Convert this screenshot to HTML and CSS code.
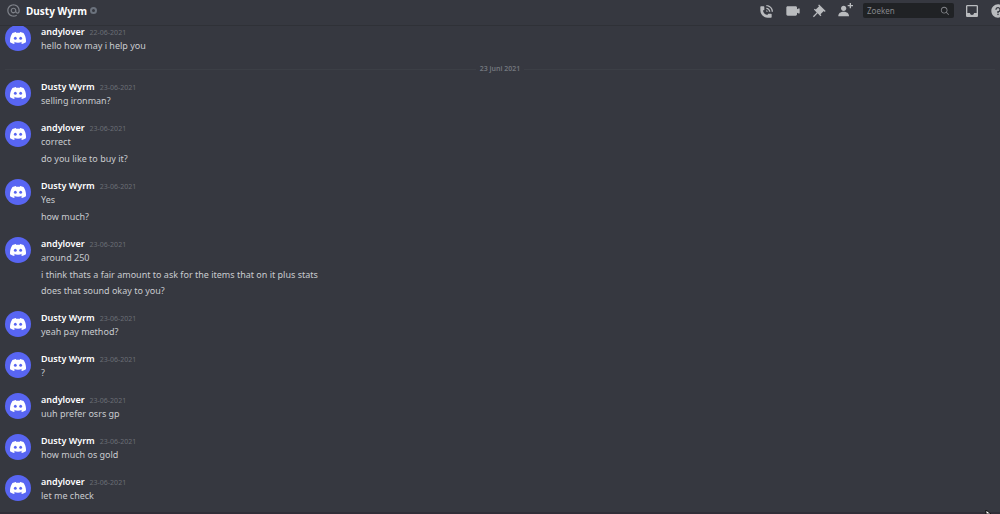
FILE: index.html
```html
<!DOCTYPE html>
<html lang="nl">
<head>
<meta charset="utf-8">
<title>Dusty Wyrm</title>
<link rel="stylesheet" href="styles.css">
</head>
<body>
<svg class="sprite" aria-hidden="true">
  <symbol id="clyde" viewBox="0 0 24 18">
    <path fill="#fff" d="M20.3 1.5A19.8 19.8 0 0 0 15.4 0l-.7 1.3a18.300 18.300 0 0 0-5.400 0L8.600 0a19.700 19.700 0 0 0-4.900 1.500C.6 6.200-.3 10.700.1 15.200A19.900 19.900 0 0 0 6.100 18l1.300-2-1.900-.9.400-.4c4 1.800 8.200 1.800 12.200 0l.4.400-1.900.9 1.300 2a19.800 19.800 0 0 0 6-2.800c.5-5.200-.8-9.700-3.600-13.700z"/>
    <ellipse cx="8" cy="9.500" rx="2.100" ry="2.300" fill="#5865f2"/>
    <ellipse cx="16" cy="9.500" rx="2.100" ry="2.300" fill="#5865f2"/>
  </symbol>
</svg>
<header class="topbar">
  <svg class="at" viewBox="0 0 24 24" aria-hidden="true"><path fill="currentColor" d="M12 2C6.486 2 2 6.486 2 12C2 17.515 6.486 22 12 22C14.039 22 15.993 21.398 17.652 20.259L16.521 18.611C15.195 19.519 13.633 20 12 20C7.589 20 4 16.411 4 12C4 7.589 7.589 4 12 4C16.411 4 20 7.589 20 12V12.782C20 14.170 19.402 15 18.400 15L18.398 15.018C18.338 15.005 18.273 15 18.209 15H18C17.437 15 16.600 14.182 16.600 13.631V12C16.600 9.464 14.537 7.400 12 7.400C9.463 7.400 7.400 9.463 7.400 12C7.400 14.537 9.463 16.600 12 16.600C13.234 16.600 14.350 16.105 15.177 15.303C15.826 16.346 16.960 17 18 17L18.002 16.981C18.064 16.994 18.129 17 18.195 17H18.400C20.552 17 22 15.306 22 12.782V12C22 6.486 17.514 2 12 2ZM12 14.599C10.566 14.599 9.400 13.433 9.400 11.999C9.400 10.565 10.566 9.399 12 9.399C13.434 9.399 14.600 10.565 14.600 11.999C14.600 13.433 13.434 14.599 12 14.599Z"/></svg>
  <h1 class="title">Dusty Wyrm</h1>
  <span class="status" role="img" aria-label="Offline"></span>
  <div class="tools">
    <button class="tool" aria-label="Spraakoproep starten"><svg viewBox="0 0 24 24"><path fill="currentColor" d="M11 5V3C16.515 3 21 7.486 21 13H19C19 8.589 15.411 5 11 5ZM17 13H15C15 10.795 13.206 9 11 9V7C14.309 7 17 9.691 17 13ZM11 11V13H13C13 11.896 12.105 11 11 11ZM14 16H18C18.553 16 19 16.447 19 17V21C19 21.553 18.553 22 18 22H13C6.925 22 2 17.075 2 11V6C2 5.447 2.448 5 3 5H7C7.553 5 8 5.447 8 6V10C8 10.553 7.553 11 7 11H6C6.063 14.938 9 18 13 18V17C13 16.447 13.447 16 14 16Z"/></svg></button>
    <button class="tool" aria-label="Videogesprek starten"><svg viewBox="0 0 24 24"><path fill="currentColor" d="M21.526 8.149C21.231 7.966 20.862 7.951 20.553 8.105L18 9.382V7C18 5.897 17.103 5 16 5H4C2.897 5 2 5.897 2 7V17C2 18.104 2.897 19 4 19H16C17.103 19 18 18.104 18 17V14.618L20.553 15.894C20.694 15.965 20.847 16 21 16C21.183 16 21.365 15.949 21.526 15.851C21.820 15.668 22 15.347 22 15V9C22 8.653 21.820 8.332 21.526 8.149Z"/></svg></button>
    <button class="tool" aria-label="Vastgemaakte berichten"><svg viewBox="0 0 24 24"><path fill="currentColor" d="M22 12L12.101 2.101L10.686 3.515L12.101 4.929L7.151 9.879L5.737 8.464L4.322 9.879L8.565 14.122L2.908 19.778L4.322 21.192L9.979 15.536L14.222 19.778L15.636 18.364L14.222 16.950L19.171 12H19.172L20.586 13.414L22 12Z"/></svg></button>
    <button class="tool" aria-label="Vrienden toevoegen"><svg viewBox="0 0 24 24"><path fill="currentColor" d="M21 3V0H19V3H16V5H19V8H21V5H24V3H21ZM10 12C12.205 12 14 10.205 14 8C14 5.795 12.205 4 10 4C7.795 4 6 5.795 6 8C6 10.205 7.795 12 10 12ZM10 13C5.289 13 2 15.467 2 19V20H18V19C18 15.467 14.711 13 10 13Z"/></svg></button>
    <label class="search">
      <input class="search-input" type="text" placeholder="Zoeken" aria-label="Zoeken">
      <svg class="search-icon" viewBox="0 0 24 24" aria-hidden="true"><path fill="currentColor" d="M21.707 20.293L16.314 14.900C17.403 13.504 18 11.799 18 10C18 5.589 14.411 2 10 2C5.589 2 2 5.589 2 10C2 14.411 5.589 18 10 18C11.799 18 13.504 17.403 14.900 16.314L20.293 21.707L21.707 20.293ZM10 16C6.691 16 4 13.309 4 10C4 6.691 6.691 4 10 4C13.309 4 16 6.691 16 10C16 13.309 13.309 16 10 16Z"/></svg>
    </label>
    <button class="tool" aria-label="Postvak"><svg viewBox="0 0 24 24"><path fill="currentColor" fill-rule="evenodd" d="M19 3H5C3.900 3 3 3.900 3 5V19C3 20.100 3.900 21 5 21H19C20.100 21 21 20.100 21 19V5C21 3.900 20.100 3 19 3ZM19 15H15C15 16.660 13.650 18 12 18S9 16.660 9 15H5V5H19V15Z"/></svg></button>
    <button class="tool" aria-label="Hulp"><svg viewBox="0 0 24 24"><path fill="currentColor" d="M12 2C6.486 2 2 6.487 2 12C2 17.515 6.486 22 12 22C17.514 22 22 17.515 22 12C22 6.487 17.514 2 12 2ZM12 18.250C11.310 18.250 10.750 17.691 10.750 17C10.750 16.310 11.310 15.750 12 15.750C12.690 15.750 13.250 16.310 13.250 17C13.250 17.691 12.690 18.250 12 18.250ZM13 13.875V15H11V12H12C13.104 12 14 11.103 14 10C14 8.896 13.104 8 12 8C10.896 8 10 8.896 10 10H8C8 7.795 9.795 6 12 6C14.205 6 16 7.795 16 10C16 11.861 14.723 13.429 13 13.875Z"/></svg></button>
  </div>
</header>
<main class="chat">
  <article class="group">
    <svg class="avatar" viewBox="0 0 26 26" aria-hidden="true"><circle cx="13" cy="13" r="13" fill="#5865f2"/><use href="#clyde" x="5" y="7" width="16" height="12"/></svg>
    <div class="body"><div class="meta"><h2 class="name">andylover</h2><time class="date">22-06-2021</time></div><p class="message">hello how may i help you</p></div>
  </article>
  <div class="divider"><span class="divider-label">23 juni 2021</span></div>
  <article class="group">
    <svg class="avatar" viewBox="0 0 26 26" aria-hidden="true"><circle cx="13" cy="13" r="13" fill="#5865f2"/><use href="#clyde" x="5" y="7" width="16" height="12"/></svg>
    <div class="body"><div class="meta"><h2 class="name">Dusty Wyrm</h2><time class="date">23-06-2021</time></div><p class="message">selling ironman?</p></div>
  </article>
  <article class="group">
    <svg class="avatar" viewBox="0 0 26 26" aria-hidden="true"><circle cx="13" cy="13" r="13" fill="#5865f2"/><use href="#clyde" x="5" y="7" width="16" height="12"/></svg>
    <div class="body"><div class="meta"><h2 class="name">andylover</h2><time class="date">23-06-2021</time></div><p class="message">correct</p><p class="message">do you like to buy it?</p></div>
  </article>
  <article class="group">
    <svg class="avatar" viewBox="0 0 26 26" aria-hidden="true"><circle cx="13" cy="13" r="13" fill="#5865f2"/><use href="#clyde" x="5" y="7" width="16" height="12"/></svg>
    <div class="body"><div class="meta"><h2 class="name">Dusty Wyrm</h2><time class="date">23-06-2021</time></div><p class="message">Yes</p><p class="message">how much?</p></div>
  </article>
  <article class="group">
    <svg class="avatar" viewBox="0 0 26 26" aria-hidden="true"><circle cx="13" cy="13" r="13" fill="#5865f2"/><use href="#clyde" x="5" y="7" width="16" height="12"/></svg>
    <div class="body"><div class="meta"><h2 class="name">andylover</h2><time class="date">23-06-2021</time></div><p class="message">around 250</p><p class="message">i think thats a fair amount to ask for the items that on it plus stats</p><p class="message">does that sound okay to you?</p></div>
  </article>
  <article class="group">
    <svg class="avatar" viewBox="0 0 26 26" aria-hidden="true"><circle cx="13" cy="13" r="13" fill="#5865f2"/><use href="#clyde" x="5" y="7" width="16" height="12"/></svg>
    <div class="body"><div class="meta"><h2 class="name">Dusty Wyrm</h2><time class="date">23-06-2021</time></div><p class="message">yeah pay method?</p></div>
  </article>
  <article class="group">
    <svg class="avatar" viewBox="0 0 26 26" aria-hidden="true"><circle cx="13" cy="13" r="13" fill="#5865f2"/><use href="#clyde" x="5" y="7" width="16" height="12"/></svg>
    <div class="body"><div class="meta"><h2 class="name">Dusty Wyrm</h2><time class="date">23-06-2021</time></div><p class="message">?</p></div>
  </article>
  <article class="group">
    <svg class="avatar" viewBox="0 0 26 26" aria-hidden="true"><circle cx="13" cy="13" r="13" fill="#5865f2"/><use href="#clyde" x="5" y="7" width="16" height="12"/></svg>
    <div class="body"><div class="meta"><h2 class="name">andylover</h2><time class="date">23-06-2021</time></div><p class="message">uuh prefer osrs gp</p></div>
  </article>
  <article class="group">
    <svg class="avatar" viewBox="0 0 26 26" aria-hidden="true"><circle cx="13" cy="13" r="13" fill="#5865f2"/><use href="#clyde" x="5" y="7" width="16" height="12"/></svg>
    <div class="body"><div class="meta"><h2 class="name">Dusty Wyrm</h2><time class="date">23-06-2021</time></div><p class="message">how much os gold</p></div>
  </article>
  <article class="group">
    <svg class="avatar" viewBox="0 0 26 26" aria-hidden="true"><circle cx="13" cy="13" r="13" fill="#5865f2"/><use href="#clyde" x="5" y="7" width="16" height="12"/></svg>
    <div class="body"><div class="meta"><h2 class="name">andylover</h2><time class="date">23-06-2021</time></div><p class="message">let me check</p></div>
  </article>
</main>
<svg class="pointer" viewBox="0 0 6 4" aria-hidden="true"><path d="M1 0L6 4H1Z" fill="#fff" stroke="#111" stroke-width="1"/></svg>
</body>
</html>
```

FILE: styles.css
```css
* { box-sizing: border-box; margin: 0; }

body {
  display: flex;
  flex-direction: column;
  height: 100vh;
  overflow: hidden;
  border-bottom: 2px solid #302e38;
  background: #363840;
  color: #c9cbcf;
  font: 9px/14px "Noto Sans", "Open Sans", sans-serif;
}

.sprite { position: absolute; width: 0; height: 0; }

.topbar {
  display: flex;
  align-items: center;
  flex: none;
  height: 26px;
  padding: 0 0 4px 6px;
  border-bottom: 1px solid #2f3137;
}

.at { width: 15px; height: 15px; color: #7d8088; }

.title {
  margin-left: 5px;
  color: #fff;
  font-size: 10px;
  font-weight: 700;
}

.status {
  width: 7px;
  height: 7px;
  margin-left: 3px;
  border: 2px solid #6b727d;
  border-radius: 50%;
}

.tools {
  display: flex;
  align-items: center;
  gap: 10px;
  margin-left: auto;
  margin-right: -6px;
  color: #b9bbbe;
}

.tool {
  width: 16px;
  height: 16px;
  padding: 0;
  border: 0;
  background: none;
  color: inherit;
}

.tool svg { display: block; width: 16px; height: 16px; }

.search {
  display: flex;
  align-items: center;
  width: 91px;
  height: 15px;
  padding: 0 4px;
  border-radius: 2px;
  background: #202225;
}

.search-input {
  flex: 1;
  min-width: 0;
  padding: 0;
  border: 0;
  outline: 0;
  background: none;
  color: #dcddde;
  font: 8px/14px "Noto Sans", "Open Sans", sans-serif;
}

.search-input::placeholder { color: #85878c; opacity: 1; }

.search-icon { width: 10px; height: 10px; color: #85878c; }

.chat {
  display: flex;
  flex: 1;
  flex-direction: column;
  justify-content: flex-end;
  min-height: 0;
  overflow: hidden;
  padding: 0 5px 9px;
}

.group { display: flex; flex: none; gap: 10px; }

.group + .group { margin-top: 13px; }

.avatar { flex: none; width: 26px; height: 26px; }

.meta { display: flex; align-items: baseline; gap: 5px; height: 14px; }

.name { color: #fff; font-size: 9px; font-weight: 600; }

.date { color: #6b6e76; font-size: 7px; }

.message { height: 14px; }

.message + .message { height: 16px; padding-top: 2px; }

.message:nth-child(3) { height: 17px; padding-top: 3px; }

.divider {
  display: flex;
  align-items: center;
  flex: none;
  gap: 4px;
  margin: 10px 0 5px;
  height: 12px;
}

.divider::before,
.divider::after {
  content: "";
  flex: 1;
  border-top: 1px solid #3c3f46;
}

.divider-label {
  color: #72767d;
  font-size: 7px;
  line-height: 12px;
  font-weight: 600;
}

.pointer {
  position: absolute;
  right: 9px;
  bottom: 0;
  width: 6px;
  height: 4px;
}
```
